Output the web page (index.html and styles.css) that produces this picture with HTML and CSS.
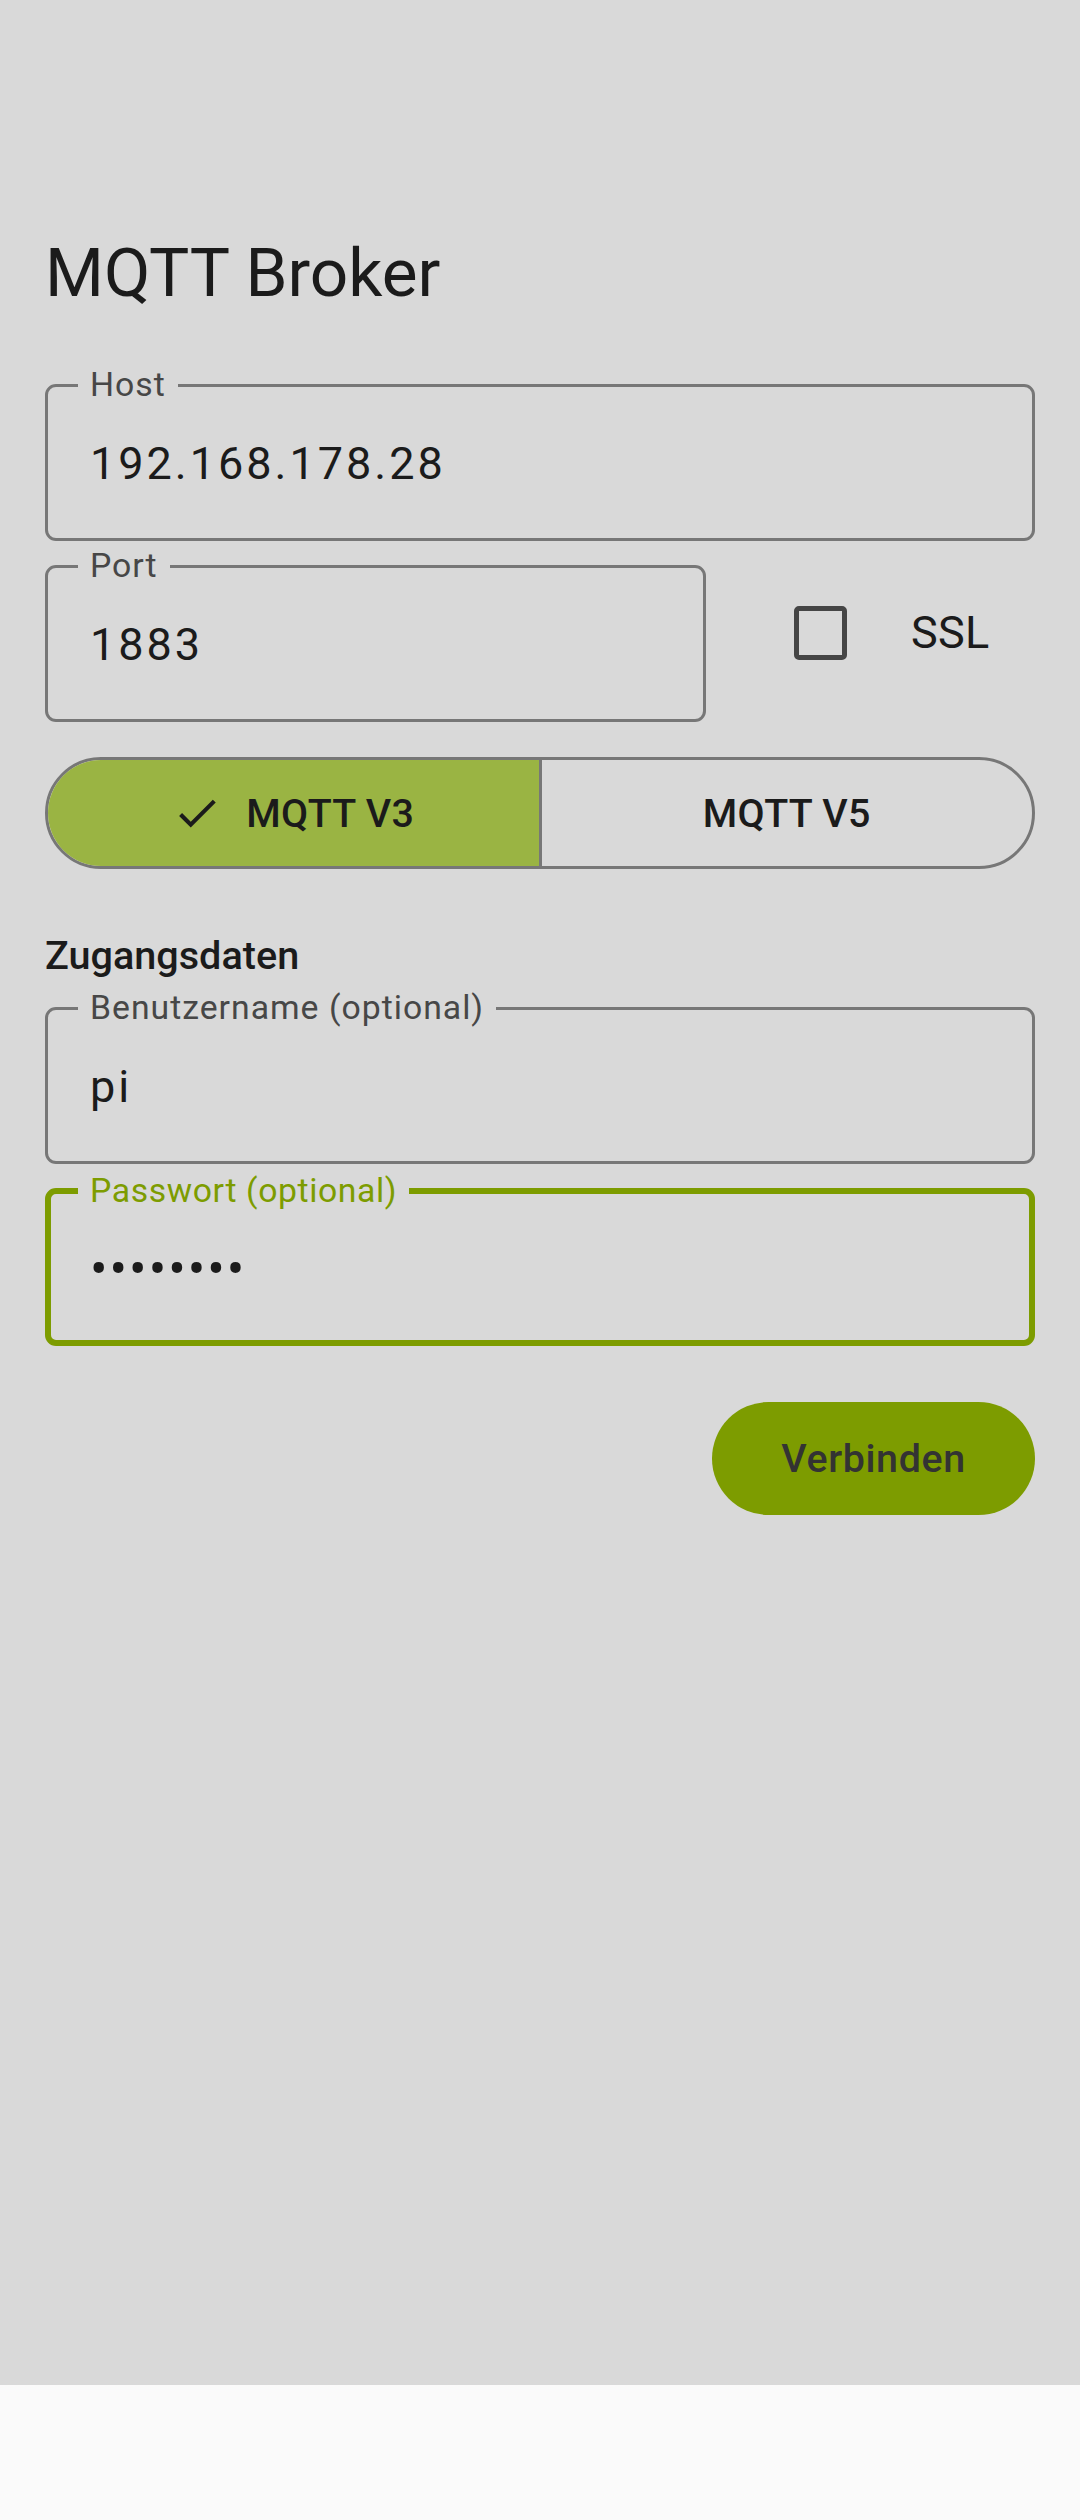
FILE: index.html
```html
<!DOCTYPE html>
<html lang="de">
<head>
<meta charset="utf-8">
<title>MQTT Broker</title>
<link rel="stylesheet" href="styles.css">
</head>
<body>
<div class="screen">
  <main class="content">
    <h1 class="title">MQTT Broker</h1>

    <fieldset class="field">
      <legend class="field-label">Host</legend>
      <div class="field-value">192.168.178.28</div>
    </fieldset>

    <div class="port-row">
      <fieldset class="field port-field">
        <legend class="field-label">Port</legend>
        <div class="field-value">1883</div>
      </fieldset>
      <div class="ssl">
        <span class="checkbox"></span>
        <span class="ssl-label">SSL</span>
      </div>
    </div>

    <div class="segmented">
      <div class="segment selected">
        <svg class="check" viewBox="0 0 24 24" width="50" height="50"><path d="M9 16.17L4.83 12l-1.42 1.41L9 19 21 7l-1.41-1.41z" fill="#1b1b1b"/></svg>
        <span>MQTT V3</span>
      </div>
      <div class="segment">
        <span>MQTT V5</span>
      </div>
    </div>

    <h2 class="section">Zugangsdaten</h2>

    <fieldset class="field">
      <legend class="field-label">Benutzername (optional)</legend>
      <div class="field-value">pi</div>
    </fieldset>

    <fieldset class="field focused">
      <legend class="field-label">Passwort (optional)</legend>
      <div class="field-value dots">••••••••</div>
    </fieldset>

    <div class="actions">
      <button class="connect">Verbinden</button>
    </div>
  </main>
  <div class="navbar"></div>
</div>
</body>
</html>
```

FILE: styles.css
```css
* { box-sizing: border-box; }
html, body { margin: 0; padding: 0; }
body {
  width: 1080px;
  height: 2520px;
  font-family: Roboto, "Noto Sans", "Liberation Sans", sans-serif;
  color: #1b1b1b;
  background: #fafafa;
}
.screen {
  display: flex;
  flex-direction: column;
  height: 2520px;
}
.content {
  height: 2385px;
  background: #d9d9d9;
  padding: 233px 45px 0;
  display: flex;
  flex-direction: column;
}
.navbar {
  height: 135px;
  background: #fafafa;
}
.title {
  margin: 0;
  font-size: 67.5px;
  line-height: 80px;
  font-weight: 400;
  letter-spacing: 0;
  color: #1b1b1b;
}
.field {
  margin: 50px 0 0;
  padding: 0 30px;
  border: 3px solid #777;
  border-radius: 11px;
  min-width: 0;
}
.field-label {
  padding: 0 12px 0 12px;
  font-size: 33.75px;
  line-height: 44px;
  letter-spacing: 1px;
  color: #474747;
}
.field-value {
  padding: 32px 12px 49px;
  font-size: 45px;
  line-height: 50px;
  letter-spacing: 3px;
  color: #1b1b1b;
}
.port-row {
  display: flex;
  align-items: center;
  margin-top: 3px;
}
.port-row .field { margin-top: 0; }
.port-field {
  flex: 0 0 661px;
}
.ssl {
  display: flex;
  align-items: center;
  flex: 1;
}
.checkbox {
  width: 53px;
  height: 54px;
  margin-left: 88px;
  border: 5.6px solid #454545;
  border-radius: 5px;
}
.ssl-label {
  margin-left: 64px;
  font-size: 45px;
  line-height: 50px;
  letter-spacing: 0.3px;
  color: #1b1b1b;
}
.segmented {
  display: flex;
  margin-top: 35px;
  height: 112px;
  border: 3px solid #777;
  border-radius: 56px;
  overflow: hidden;
}
.segment {
  flex: 1;
  display: flex;
  align-items: center;
  justify-content: center;
  gap: 24px;
  font-size: 39.4px;
  font-weight: 500;
  letter-spacing: 0.3px;
  color: #1b1b1b;
}
.segment + .segment { border-left: 3px solid #777; }
.segment.selected { background: #9ab443; }
.check { display: block; }
.section {
  margin: 62px 0 0;
  font-size: 39.6px;
  line-height: 50px;
  font-weight: 500;
  color: #1b1b1b;
}
.section + .field { margin-top: 5px; }
.field + .field { margin-top: 4.6px; }
.focused {
  border: 6px solid #7d9c00;
  padding: 0 27px;
}
.focused .field-label {
  color: #7d9c00;
  letter-spacing: 0.6px;
}
.focused .field-value { padding-bottom: 45px; }
.dots {
  font-size: 52px;
  letter-spacing: 2px;
  padding-left: 12px;
}
.actions {
  display: flex;
  justify-content: flex-end;
  margin-top: 56px;
}
.connect {
  width: 323px;
  height: 113px;
  border: none;
  border-radius: 57px;
  background: #7d9c00;
  color: #333;
  font-family: Roboto, "Noto Sans", sans-serif;
  font-size: 39.4px;
  font-weight: 500;
  letter-spacing: 0.6px;
  padding: 0;
}
```
